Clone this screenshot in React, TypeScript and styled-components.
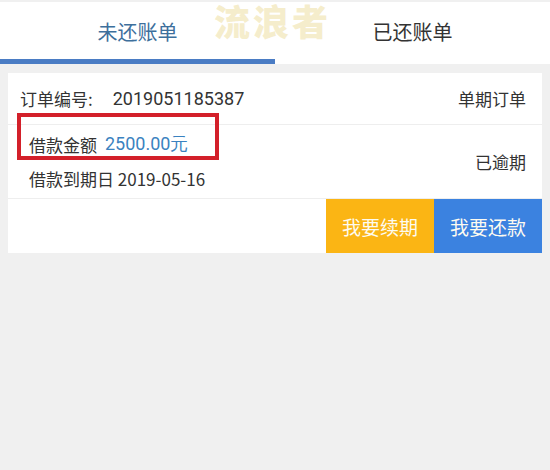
import React from "react";
import styled, { createGlobalStyle } from "styled-components";

const GlobalStyle = createGlobalStyle`
  body {
    margin: 0;
    background-color: #f0f0f0;
    font-family: "Noto Sans CJK SC", "Roboto", sans-serif;
    color: #333;
  }
`;

const tabs = [
  { id: "unpaid", label: "未还账单", active: true },
  { id: "paid", label: "已还账单", active: false },
];

const App: React.FC = () => (
  <Page>
    <GlobalStyle />
    <TabBar>
      {tabs.map(({ id, label, active }) => (
        <Tab key={id} $active={active}>
          {label}
        </Tab>
      ))}
    </TabBar>
    <Watermark>流浪者</Watermark>
    <Content>
      <BillCard>
        <OrderRow>
          <OrderNo>
            订单编号:<Digits>2019051185387</Digits>
          </OrderNo>
          <SideText>单期订单</SideText>
        </OrderRow>
        <DetailRow>
          <DetailLines>
            <Line>
              借款金额<Amount>2500.00元</Amount>
            </Line>
            <Line>借款到期日 2019-05-16</Line>
          </DetailLines>
          <SideText>已逾期</SideText>
          <Highlight />
        </DetailRow>
        <ActionRow>
          <ActionButton $color="#fbb514">我要续期</ActionButton>
          <ActionButton $color="#3b82e0">我要还款</ActionButton>
        </ActionRow>
      </BillCard>
    </Content>
  </Page>
);

export default App;

const Page = styled.div`
  position: relative;
  padding-top: 2px;
  min-height: 468px;
`;

const TabBar = styled.div`
  background-color: #fff;
  display: flex;
  height: 62px;
`;

const Tab = styled.div<{ $active: boolean }>`
  flex: 1;
  display: flex;
  align-items: center;
  justify-content: center;
  box-sizing: border-box;
  padding-top: 2px;
  font-size: 20px;
  color: ${({ $active }) => ($active ? "#3d6f9c" : "#333")};
  border-bottom: 5px solid ${({ $active }) => ($active ? "#4a7cc4" : "#fff")};
`;

const Watermark = styled.div`
  position: absolute;
  top: 0;
  left: 214px;
  line-height: 40px;
  font-size: 36px;
  font-weight: 900;
  letter-spacing: 3px;
  color: rgba(238, 222, 160, 0.55);
  pointer-events: none;
`;

const Content = styled.div`
  padding: 9px 8px;
`;

const BillCard = styled.div`
  background-color: #fff;
  display: flex;
  flex-direction: column;
`;

const OrderRow = styled.div`
  display: flex;
  align-items: center;
  justify-content: space-between;
  height: 51px;
  padding: 0 16px 0 12px;
  border-bottom: 1px solid #eee;
  font-size: 17px;
`;

const OrderNo = styled.span`
  display: flex;
  align-items: center;
`;

const Digits = styled.span`
  margin-left: 20px;
  font-family: "Roboto", sans-serif;
  font-size: 18px;
`;

const SideText = styled.span`
  font-size: 17px;
`;

const DetailRow = styled.div`
  position: relative;
  display: flex;
  align-items: center;
  justify-content: space-between;
  height: 73px;
  padding: 0 16px 0 21px;
  border-bottom: 1px solid #eee;
`;

const DetailLines = styled.div`
  display: flex;
  flex-direction: column;
  padding-top: 2px;
  align-self: flex-start;
`;

const Line = styled.div`
  display: flex;
  align-items: center;
  height: 34px;
  font-size: 17px;
`;

const Amount = styled.span`
  margin-left: 8px;
  color: #3a82c0;
  font-family: "Roboto", sans-serif;
  font-size: 18px;
`;

const Highlight = styled.div`
  position: absolute;
  left: 9px;
  top: -12px;
  width: 194px;
  height: 39px;
  border: 4px solid #d3202a;
`;

const ActionRow = styled.div`
  display: flex;
  justify-content: flex-end;
  height: 54px;
`;

const ActionButton = styled.div<{ $color: string }>`
  display: flex;
  align-items: center;
  justify-content: center;
  width: 108px;
  background-color: ${({ $color }) => $color};
  color: #fdfbf0;
  font-size: 19px;
`;
